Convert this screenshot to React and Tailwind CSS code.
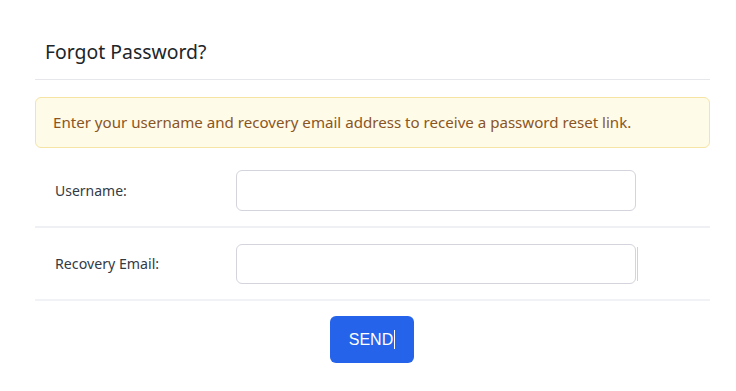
export default function App() {
  const font = { fontFamily: '"Noto Sans", "Open Sans", sans-serif' };
  return (
    <div className="w-[736px] h-[391px] bg-white overflow-hidden" style={font}>
      <div className="ml-[35px] w-[675px] flex flex-col">
        <div className="pt-[38px] pb-[14px] px-[10px] border-b border-[#e5e7eb]">
          <h2 className="text-[19.4px] leading-[27px] text-[#212529] font-normal">Forgot Password?</h2>
        </div>
        <div className="mt-[17px] h-[51px] flex items-center px-[17px] rounded-[6px] border border-[#f5e4a3] bg-[#fefbe9] text-[15.1px] text-[#8a5523]">
          Enter your username and recovery email address to receive a password reset link.
        </div>
        <div className="flex items-center pt-[22px] pb-[15px] pl-[20px] border-b-2 border-[#eef0f3]">
          <label className="w-[181px] text-[14px] text-[#333a44]">Username:</label>
          <input type="text" className="w-[400px] h-[41px] rounded-[6px] border border-[#d3d4dc] bg-white outline-none" />
        </div>
        <div className="flex items-center pt-[16px] pb-[15px] pl-[20px] border-b-2 border-[#f1f2f5]">
          <label className="w-[181px] text-[14.2px] text-[#333a44]">Recovery Email:</label>
          <input type="email" className="w-[400px] h-[40px] rounded-[6px] border border-[#d3d4dc] bg-white outline-none" />
          <span className="ml-[1px] w-px h-[34px] bg-[#ccd3e4]"></span>
        </div>
        <div className="flex mt-[15px] pl-[295px]">
          <button
            className="w-[84px] h-[47px] rounded-[6px] bg-[#2563eb] text-white text-[16px] flex items-center justify-center"
            style={{ fontFamily: '"Liberation Sans", Arial, sans-serif' }}
          >
            <span>SEND</span>
            <span className="ml-[1px] w-px h-[19px] bg-white"></span>
          </button>
        </div>
      </div>
    </div>
  );
}
